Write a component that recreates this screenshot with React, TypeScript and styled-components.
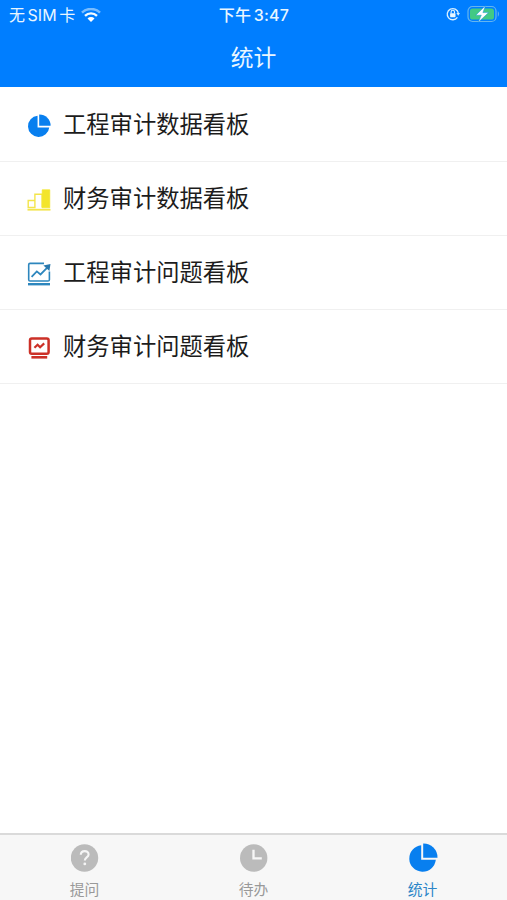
import React from 'react';
import styled, { createGlobalStyle } from 'styled-components';

const Global = createGlobalStyle`
  * { box-sizing: border-box; }
  html, body { margin: 0; padding: 0; background: #fff; overflow: hidden; }
  body { font-family: Inter, "Noto Sans CJK SC", sans-serif; }
  svg { display: block; flex: none; }
`;

const Screen = styled.div`
  display: flex;
  flex-direction: column;
  width: 100%;
  height: 100vh;
  background: #fff;
`;

const Header = styled.header`
  height: 87px;
  flex: none;
  background: #007eff;
  color: #e9f6ff;
`;

const StatusBar = styled.div`
  display: grid;
  grid-template-columns: 1fr auto 1fr;
  align-items: center;
  height: 30px;
  padding: 0 7px 0 9px;
`;

const Carrier = styled.div`
  display: flex;
  align-items: center;
  gap: 6px;
  font-size: 16px;
  line-height: 28px;
  letter-spacing: 0.1px;
  word-spacing: -2.2px;
  white-space: nowrap;
`;

const Clock = styled.div`
  font-size: 16px;
  line-height: 28px;
  font-weight: 500;
  letter-spacing: 0.25px;
  word-spacing: -2px;
  white-space: nowrap;
  padding-right: 1px;
`;

const StatusIcons = styled.div`
  display: flex;
  align-items: center;
  justify-content: flex-end;
  gap: 7px;
  padding-bottom: 2px;
`;

const Title = styled.h1`
  margin: 0;
  padding-top: 11px;
  font-size: 22.8px;
  line-height: 34px;
  font-weight: 400;
  text-align: center;
`;

const List = styled.main`
  flex: 1;
  padding-top: 1px;
`;

const Row = styled.div`
  display: flex;
  align-items: center;
  gap: 12px;
  height: 74px;
  padding: 2px 27px 0;
  border-bottom: 1px solid #f0f0f0;
`;

const RowLabel = styled.span`
  font-size: 23.3px;
  line-height: 34px;
  padding-bottom: 2px;
  color: #1c1c1c;
  white-space: nowrap;
`;

const TabBar = styled.nav`
  display: grid;
  grid-template-columns: repeat(3, 1fr);
  height: 67px;
  flex: none;
  background: #f7f7f7;
  border-top: 2px solid #dadada;
`;

const Tab = styled.div<{ $active?: boolean }>`
  display: flex;
  flex-direction: column;
  align-items: center;
  padding-top: 8px;
  color: ${(p) => (p.$active ? '#2d86c8' : '#999')};
`;

const TabIcon = styled.div`
  display: flex;
  align-items: center;
  justify-content: center;
  width: 30px;
  height: 30px;
`;

const TabLabel = styled.span`
  margin-top: 6px;
  font-size: 14.8px;
  line-height: 22px;
`;

const WifiIcon = () => (
  <svg width="20" height="14" viewBox="0 0 20 14" fill="none">
    <path d="M1 4.6a13 13 0 0 1 18 0" stroke="#78bcff" strokeWidth="2.5" />
    <path d="M4 7.8a8.7 8.7 0 0 1 12 0" stroke="#f4fbff" strokeWidth="2.4" />
    <path d="M6.5 10.4a5 5 0 0 1 7 0L10 14z" fill="#fff" />
  </svg>
);

const LockIcon = () => (
  <svg width="14" height="14" viewBox="0 0 14 14" fill="none">
    <path d="M11.4 10.4A5.6 5.6 0 1 1 12.3 6" stroke="#d8efff" strokeWidth="1.3" />
    <path d="M10.4 6h3.6l-1.8 2.8z" fill="#d8efff" />
    <rect x="4.1" y="6.2" width="5.4" height="4" rx=".6" fill="#e8f6ff" />
    <path d="M5.1 6.5V5a1.7 1.7 0 0 1 3.4 0v1.5" stroke="#e8f6ff" strokeWidth="1.1" />
  </svg>
);

const BatteryIcon = () => (
  <svg width="33" height="18" viewBox="0 0 33 18" fill="none">
    <rect x="1" y="1.5" width="28" height="15" rx="4.5" stroke="#65b5ef" strokeWidth="1.2" />
    <rect x="3" y="3.5" width="24" height="11" rx="2.6" fill="#42c985" />
    <path d="M30.8 6.3c1.5.8 1.5 4.6 0 5.4z" fill="#65b5ef" />
    <path d="M18.4.8 8.8 10.2h5.5L11.2 17.3 21.6 7.6h-5.7z" fill="#fff" stroke="#1795df" strokeWidth=".5" />
  </svg>
);

const PieIcon = ({ size }: { size: number }) => (
  <svg width={size} height={size} viewBox="0 0 30 30" fill="#087fef">
    <path d="M13.2 2.2v14.6h14.6A13.3 13.3 0 1 1 13.2 2.2z" />
    <path d="M15.2.5A14 14 0 0 1 29.5 14.8H15.2z" />
  </svg>
);

const BarsIcon = () => (
  <svg width="24" height="24" viewBox="0 0 24 24" fill="none" stroke="#f3e54b" strokeWidth="1.4">
    <path d="M1.2 19.5v-7h6.7v7zM7.9 19.5V6.3h7.2v13.2" />
    <path d="M15.2 1.8h7.6v18h-7.6z" fill="#f3e52b" stroke="#f3e52b" strokeWidth=".7" />
    <path d="M.5 21.7h23" strokeWidth="1.8" />
  </svg>
);

const TrendIcon = () => (
  <svg width="24" height="24" viewBox="0 0 24 24" fill="none" stroke="#2d86bd" strokeWidth="1.6">
    <path d="M17 1.4H3Q1.7 1.4 1.7 2.7v15Q1.7 19 3 19h18q1.4 0 1.4-1.3V9.5" />
    <path d="m4.6 14.8 5.2-5.4 3.7 3.1 7-7.2" strokeWidth="1.8" />
    <path d="m16.4 3.5 7.1-1.5-1.1 6.9z" fill="#2878ad" stroke="none" />
    <path d="M1 22.2h22" strokeWidth="2.4" />
  </svg>
);

const MonitorIcon = () => (
  <svg width="24" height="24" viewBox="0 0 24 24" fill="none" stroke="#cc3027">
    <rect x="3" y="2.5" width="18.6" height="15.2" rx="1.8" strokeWidth="2.5" />
    <path d="m7.4 11.8 3.2-3 2.5 2.4 4.1-3.8" strokeWidth="2.2" />
    <path d="M4.4 21.3h15.8" strokeWidth="2.6" />
  </svg>
);

const QuestionIcon = () => (
  <svg width="28" height="28" viewBox="0 0 28 28" fill="none">
    <circle cx="13.5" cy="14" r="13.7" fill="#bbb" />
    <path d="M9.8 10.8c0-4.9 7.8-4.8 7.8-.4 0 2.9-3.8 3.1-3.8 6" stroke="#f5f5f5" strokeWidth="2.1" />
    <circle cx="13.8" cy="19.9" r="1.4" fill="#f5f5f5" />
  </svg>
);

const ClockIcon = () => (
  <svg width="28" height="28" viewBox="0 0 28 28" fill="none">
    <circle cx="13.7" cy="14" r="13.7" fill="#bbb" />
    <path d="M13.5 5.7v8.6h8.3" stroke="#f7f7f7" strokeWidth="2.3" />
  </svg>
);

const rows = [
  { icon: <PieIcon size={24} />, label: '工程审计数据看板' },
  { icon: <BarsIcon />, label: '财务审计数据看板' },
  { icon: <TrendIcon />, label: '工程审计问题看板' },
  { icon: <MonitorIcon />, label: '财务审计问题看板' },
];

const tabs = [
  { icon: <QuestionIcon />, label: '提问' },
  { icon: <ClockIcon />, label: '待办' },
  { icon: <PieIcon size={30} />, label: '统计', active: true },
];

export default function App() {
  return (
    <Screen>
      <Global />
      <Header>
        <StatusBar>
          <Carrier>
            <span>无 SIM 卡</span>
            <WifiIcon />
          </Carrier>
          <Clock>下午 3:47</Clock>
          <StatusIcons>
            <LockIcon />
            <BatteryIcon />
          </StatusIcons>
        </StatusBar>
        <Title>统计</Title>
      </Header>
      <List>
        {rows.map((r) => (
          <Row key={r.label}>
            {r.icon}
            <RowLabel>{r.label}</RowLabel>
          </Row>
        ))}
      </List>
      <TabBar>
        {tabs.map((t) => (
          <Tab key={t.label} $active={t.active}>
            <TabIcon>{t.icon}</TabIcon>
            <TabLabel>{t.label}</TabLabel>
          </Tab>
        ))}
      </TabBar>
    </Screen>
  );
}
